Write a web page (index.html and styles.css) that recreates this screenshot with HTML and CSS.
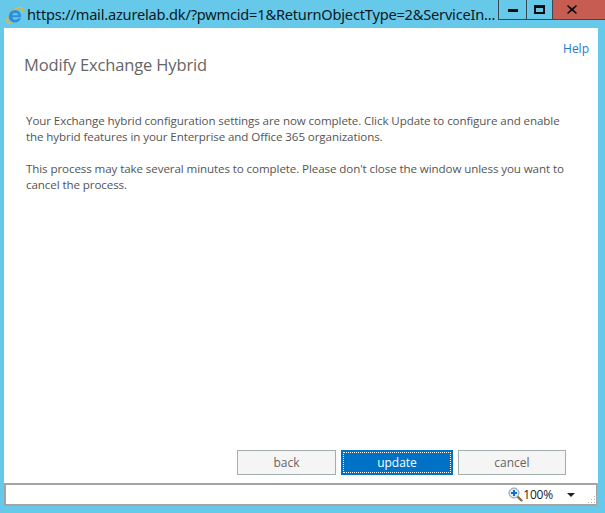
FILE: index.html
```html
<!DOCTYPE html>
<html lang="en">
<head>
<meta charset="utf-8">
<title>Modify Exchange Hybrid</title>
<link rel="stylesheet" href="styles.css">
</head>
<body>
<div class="window">
  <header class="titlebar">
    <svg class="ie" width="17" height="18" viewBox="0 0 17 18" aria-hidden="true">
      <path d="M2.500 12.500C3.500 8.500 6 5 9.500 3c3-1.800 6-2 6.800-.7.5.9.1 2.500-.7 4" fill="none" stroke="#e9b92d" stroke-width="1.600"/>
      <path d="M1.500 12C.6 14.500.5 16 1.500 16.700c1 .7 3 .2 5-1" fill="none" stroke="#e9b92d" stroke-width="1.300"/>
      <path d="M2.800 10.500C3 6.800 5.800 4 9 4c3.500 0 6 2.800 6 6.300v1H6.300c.2 2.800 4.500 3.200 6.200.9h2.400C14 15 11.500 16.500 9 16.500c-3.700 0-6.400-2.700-6.200-6zm3.500-1.300h6c-.2-2.800-5.500-2.900-6 0z" fill="#2c8fdc" fill-rule="evenodd"/>
    </svg>
    <span class="url">https://mail.azurelab.dk/?pwmcid=1&amp;ReturnObjectType=2&amp;ServiceIn...</span>
    <div class="controls">
      <div class="ctl ctl-min"><span class="glyph-min"></span></div>
      <div class="ctl ctl-max"><span class="glyph-max"></span></div>
      <div class="ctl ctl-close">
        <svg width="10" height="9" viewBox="0 0 10 9" aria-hidden="true"><path d="M1 0l4 3.200L9 0l1 1-3.500 3.500L10 8l-1 1-4-3.200L1 9 0 8l3.500-3.500L0 1z" fill="#111"/></svg>
      </div>
    </div>
  </header>
  <main class="content">
    <a class="help" href="#">Help</a>
    <h1 class="heading">Modify Exchange Hybrid</h1>
    <p class="para">Your Exchange hybrid configuration settings are now complete. Click Update to configure and enable<br>the hybrid features in your Enterprise and Office 365 organizations.</p>
    <p class="para">This process may take several minutes to complete. Please don't close the window unless you want to<br>cancel the process.</p>
    <div class="actions">
      <button class="btn btn-back" type="button">back</button>
      <button class="btn btn-primary" type="button"><span class="focus">update</span></button>
      <button class="btn btn-cancel" type="button">cancel</button>
    </div>
  </main>
  <footer class="status">
    <svg class="zoom" width="15" height="15" viewBox="0 0 15 15" aria-hidden="true">
      <path d="M9.500 9.500l4 4" stroke="#8a6a3a" stroke-width="2.400" stroke-linecap="round"/>
      <circle cx="6" cy="6" r="5" fill="#dfeaf5" stroke="#8c9bab"/>
      <path d="M3 6h6M6 3v6" stroke="#0f6fd0" stroke-width="2"/>
    </svg>
    <span class="pct">100%</span>
    <span class="caret"></span>
    <span class="grip"></span>
  </footer>
</div>
</body>
</html>
```
FILE: styles.css
```css
* { box-sizing: border-box; }
html, body { margin: 0; height: 100%; }
body { background: #67c9ea; font-family: "Open Sans", "Noto Sans", sans-serif; overflow: hidden; }
.window { width: 605px; height: 513px; display: flex; flex-direction: column; }
.titlebar { height: 28px; flex: none; display: flex; align-items: flex-start; padding-left: 6px; }
.ie { margin-top: 6px; flex: none; }
.url { margin-left: 4px; margin-top: 3px; font-size: 14.6px; line-height: 22px; color: #0b1a22; white-space: nowrap; font-family: "Noto Sans", sans-serif; letter-spacing: -0.2px; width: 470px; }
.controls { margin-left: auto; display: flex; height: 20px; border-left: 1px solid #3a4a52; border-bottom: 1px solid #3a4a52; }
.ctl { height: 19px; display: flex; align-items: center; justify-content: center; }
.ctl-min { width: 28px; border-right: 1px solid #3a4a52; }
.ctl-max { width: 26px; border-right: 1px solid #3a4a52; }
.ctl-close { width: 52px; background: #c75d52; padding-right: 14px; }
.glyph-min { width: 10px; height: 3px; background: #0c0c0c; margin-top: 2px; }
.glyph-max { width: 11px; height: 9px; border: 2px solid #0c0c0c; border-top-width: 3px; }
.content { flex: 1; margin: 0 7px 0 4px; background: #fff; position: relative; display: flex; flex-direction: column; padding: 0 0 8px 22px; }
.help { position: absolute; top: 13px; right: 9px; font-size: 12px; line-height: 16px; color: #1b7cc8; text-decoration: none; }
.heading { margin: 27px 0 0 -2px; font-size: 16.5px; line-height: 20px; font-weight: 400; color: #666; letter-spacing: -0.15px; }
.para { margin: 38px 0 0; font-size: 11.6px; line-height: 16px; color: #555; white-space: nowrap; letter-spacing: -0.1px; }
.para + .para { margin-top: 16px; }
.actions { margin-top: auto; display: flex; gap: 5px; padding-left: 211px; }
.btn { height: 25px; padding: 0; border: 1px solid #a3aeae; background: #f5f5f5; color: #666; font: 400 12px/1 "Open Sans", "Noto Sans", sans-serif; }
.btn-back { width: 99px; }
.btn-primary { width: 112px; background: #0072c6; border-color: #0072c6; color: #fff; padding: 1px; }
.btn-cancel { width: 108px; }
.focus { display: flex; width: 100%; height: 100%; align-items: center; justify-content: center; border: 1px dotted #fff; }
.status { flex: none; height: 23px; margin: 0 8px 7px 4px; border: 2px solid #a4a4a4; border-right-width: 1px; background: #fff; display: flex; align-items: center; justify-content: flex-end; position: relative; padding-right: 25px; }
.zoom { margin-right: 0; }
.pct { font-size: 12px; line-height: 16px; color: #1a1a1a; margin-right: 18px; letter-spacing: -0.2px; }
.caret { width: 0; height: 0; border-left: 4px solid transparent; border-right: 4px solid transparent; border-top: 4px solid #222; position: absolute; right: 21px; top: 8px; }
.grip { position: absolute; right: 1px; bottom: 1px; width: 8px; height: 8px; background: radial-gradient(circle, #b5b5b5 1px, transparent 1px) 0 0 / 3px 3px; clip-path: polygon(100% 0, 100% 100%, 0 100%); }
```
